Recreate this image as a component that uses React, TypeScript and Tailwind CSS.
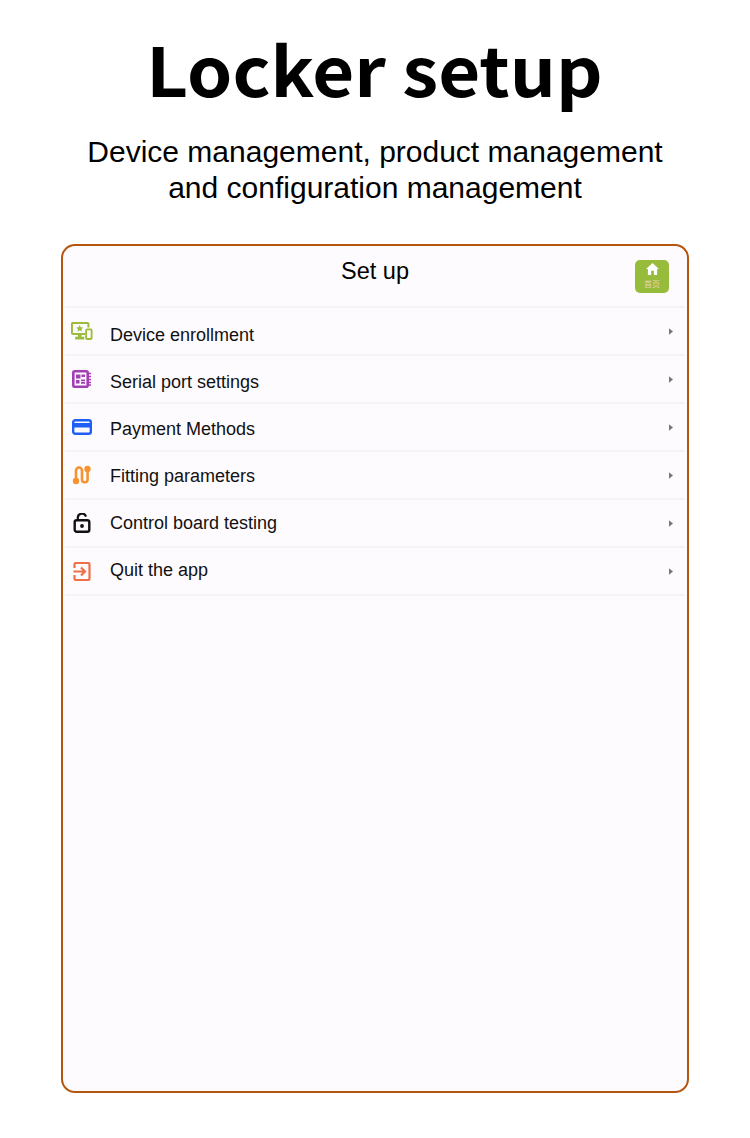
import { type ReactNode } from 'react';

type Row = { label: string; icon: ReactNode; textClass: string };

const DeviceIcon = () => (
  <svg width="22" height="19" viewBox="0 0 24 20.700" fill="none">
    <path d="M15.500 13H2.200A1.200 1.200 0 0 1 1 11.800V2.200A1.200 1.200 0 0 1 2.200 1h15.600A1.200 1.200 0 0 1 19 2.200V6" stroke="#9bbb3c" strokeWidth="2.200" />
    <path d="M9.500 3.200l1.100 2.600 2.800.2-2.100 1.800.7 2.700-2.500-1.500-2.500 1.500.7-2.700L5.600 6l2.800-.2z" fill="#9bbb3c" />
    <path d="M7.500 13h4v3h3v3h-10v-3h3z" fill="#9bbb3c" />
    <rect x="16.500" y="8" width="6" height="10.500" rx="1" stroke="#9bbb3c" strokeWidth="2" />
  </svg>
);

const SerialIcon = () => (
  <svg width="20" height="18" viewBox="0 0 20 18" fill="none">
    <rect x="1.300" y="1.300" width="14.400" height="15.400" rx="1.500" stroke="#a33fb5" strokeWidth="2.600" />
    <rect x="4" y="4.500" width="4.500" height="4" fill="#a33fb5" />
    <rect x="9.500" y="4.500" width="3.500" height="2.500" fill="#a33fb5" />
    <rect x="4" y="10" width="3.500" height="3.500" fill="#a33fb5" />
    <path d="M9 9.500h4v1.700H9zM9 12h4v1.700H9z" fill="#a33fb5" />
    <path d="M16 3.500h3M16 6.500h3M16 9.500h3M16 12.500h3M16 15h3" stroke="#a33fb5" strokeWidth="1.400" />
  </svg>
);

const CardIcon = () => (
  <svg width="20" height="16" viewBox="0 0 20 16" fill="none">
    <rect x="1.200" y="1.200" width="17.600" height="13.600" rx="2" stroke="#1f5ff5" strokeWidth="2.400" />
    <rect x="1" y="4" width="18" height="4.500" fill="#1f5ff5" />
  </svg>
);

const FittingIcon = () => (
  <svg width="20" height="20" viewBox="-0.500 0 20 20" fill="none">
    <path d="M3.500 14V5.500a3 3 0 0 1 6 0v9a2.800 2.800 0 0 0 5.600 0V6" stroke="#f59331" strokeWidth="2.600" />
    <circle cx="3.500" cy="16" r="3.200" fill="#f59331" />
    <circle cx="15" cy="4" r="3.200" fill="#f59331" />
  </svg>
);

const LockIcon = () => (
  <svg width="18" height="20" viewBox="-0.500 0 18 20" fill="none">
    <rect x="1.200" y="7.200" width="14.600" height="11.600" rx="2" stroke="#111" strokeWidth="2.400" />
    <path d="M4.300 7.500V5a4.200 4.200 0 0 1 8.200-1.400" stroke="#111" strokeWidth="2.200" />
    <circle cx="8.500" cy="13" r="1.900" fill="#111" />
  </svg>
);

const QuitIcon = () => (
  <svg width="20" height="19" viewBox="-0.500 0 20 19" fill="none">
    <path d="M2 6V2.500A1.500 1.500 0 0 1 3.500 1h12A1.500 1.500 0 0 1 17 2.500v14a1.500 1.500 0 0 1-1.500 1.500h-12A1.500 1.500 0 0 1 2 16.500V13" stroke="#ee7048" strokeWidth="2.200" />
    <path d="M1 9.500h11M8.500 5.500l4 4-4 4" stroke="#ee7048" strokeWidth="2.200" />
  </svg>
);

// the labels sit a little higher on each row in the reference
const rows: Row[] = [
  { label: 'Device enrollment', icon: <DeviceIcon />, textClass: 'pt-[8px]' },
  { label: 'Serial port settings', icon: <SerialIcon />, textClass: 'pt-[6px]' },
  { label: 'Payment Methods', icon: <CardIcon />, textClass: 'pt-[4px]' },
  { label: 'Fitting parameters', icon: <FittingIcon />, textClass: 'pt-[2px]' },
  { label: 'Control board testing', icon: <LockIcon />, textClass: 'pt-0' },
  { label: 'Quit the app', icon: <QuitIcon />, textClass: 'pb-[2px]' },
];

export default function App() {
  return (
    <div className="h-[1138px] w-[750px] bg-white pt-[24px] font-['Liberation_Sans',sans-serif] text-black">
      <h1 className="scale-x-[1.065] pr-[1px] text-center font-['Noto_Sans_CJK_SC',sans-serif] text-[68px] leading-[88px] font-bold">Locker setup</h1>
      <p className="mt-[22px] text-center text-[30px] leading-9">
        Device management, product management
        <br />
        and configuration management
      </p>

      <div className="mx-auto mt-[38px] h-[849px] w-[628px] rounded-[14px] border-2 border-[#b5560f] bg-[#fefbff] px-[2px]">
        <div className="relative h-[62px] border-b-2 border-[#f6f3f6] pt-[9px] text-center text-[23.5px] leading-[32px]">
          Set up
          <div className="absolute top-[14px] right-[16px] flex h-[33px] w-[34px] flex-col items-center rounded-[5px] bg-[#97bb3a] pt-[3px]">
            <svg width="13" height="12" viewBox="0 0 14 13" fill="white">
              <path d="M7 0l7 6.500h-2V13H8.500V8.500h-3V13H2V6.500H0z" />
            </svg>
            <span className="mt-[3px] font-['Noto_Sans_CJK_SC',sans-serif] text-[8px] leading-[11px] text-[#ead3b8]">首页</span>
          </div>
        </div>

        {rows.map((row) => (
          <div key={row.label} className="flex h-12 items-center border-b-2 border-[#f6f3f6] pr-[12px] text-lg text-[#111]">
            <div className="mr-[5px] flex w-[40px] shrink-0 justify-center pr-[6px]">{row.icon}</div>
            <span className={`flex-1 leading-[28px] ${row.textClass}`}>{row.label}</span>
            <svg width="4" height="7" viewBox="0 0 5 8" fill="#777">
              <path d="M0 0l5 4-5 4z" />
            </svg>
          </div>
        ))}
      </div>
    </div>
  );
}
